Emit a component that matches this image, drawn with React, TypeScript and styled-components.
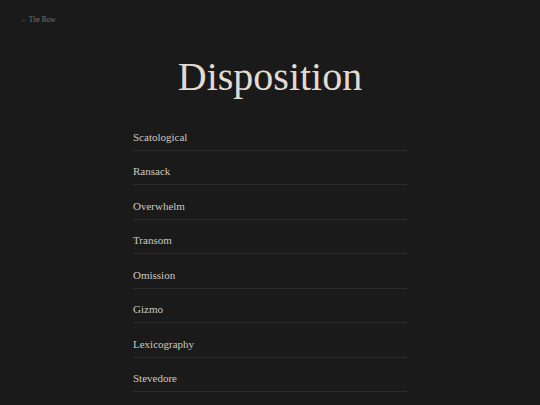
import styled, { createGlobalStyle } from "styled-components";

const GlobalStyle = createGlobalStyle`
  html, body {
    margin: 0;
    padding: 0;
    background-color: #1a1a1a;
  }
  body {
    font-family: "Liberation Serif", "Times New Roman", serif;
    color: #cbc7bf;
  }
`;

const Page = styled.div`
  min-height: 405px;
  background-color: #1a1a1a;
  display: flex;
  flex-direction: column;
`;

const TopBar = styled.div`
  padding: 15px 20px 0 20px;
  height: 10px;
`;

const BackLink = styled.a`
  font-size: 7.2px;
  line-height: 10px;
  color: #77746f;
  text-decoration: none;
  display: block;
`;

const Title = styled.h1`
  margin: 28px 0 0 0;
  font-weight: normal;
  font-size: 40px;
  line-height: 48px;
  text-align: center;
  color: #e0dcd3;
`;

const List = styled.ul`
  list-style: none;
  margin: 15px auto 0 auto;
  padding: 0;
  width: 274px;
`;

const Item = styled.li`
  padding: 14.5px 0 5.5px 0;
  font-size: 11px;
  line-height: 13.5px;
  color: #cdc9c1;
  border-bottom: 1px solid #2c2c2c;
`;

const words = [
  "Scatological",
  "Ransack",
  "Overwhelm",
  "Transom",
  "Omission",
  "Gizmo",
  "Lexicography",
  "Stevedore",
];

const App = () => {
  return (
    <>
      <GlobalStyle />
      <Page>
        <TopBar>
          <BackLink href="#">← The Bow</BackLink>
        </TopBar>
        <Title>Disposition</Title>
        <List>
          {words.map((w) => (
            <Item key={w}>{w}</Item>
          ))}
        </List>
      </Page>
    </>
  );
};

export default App;
